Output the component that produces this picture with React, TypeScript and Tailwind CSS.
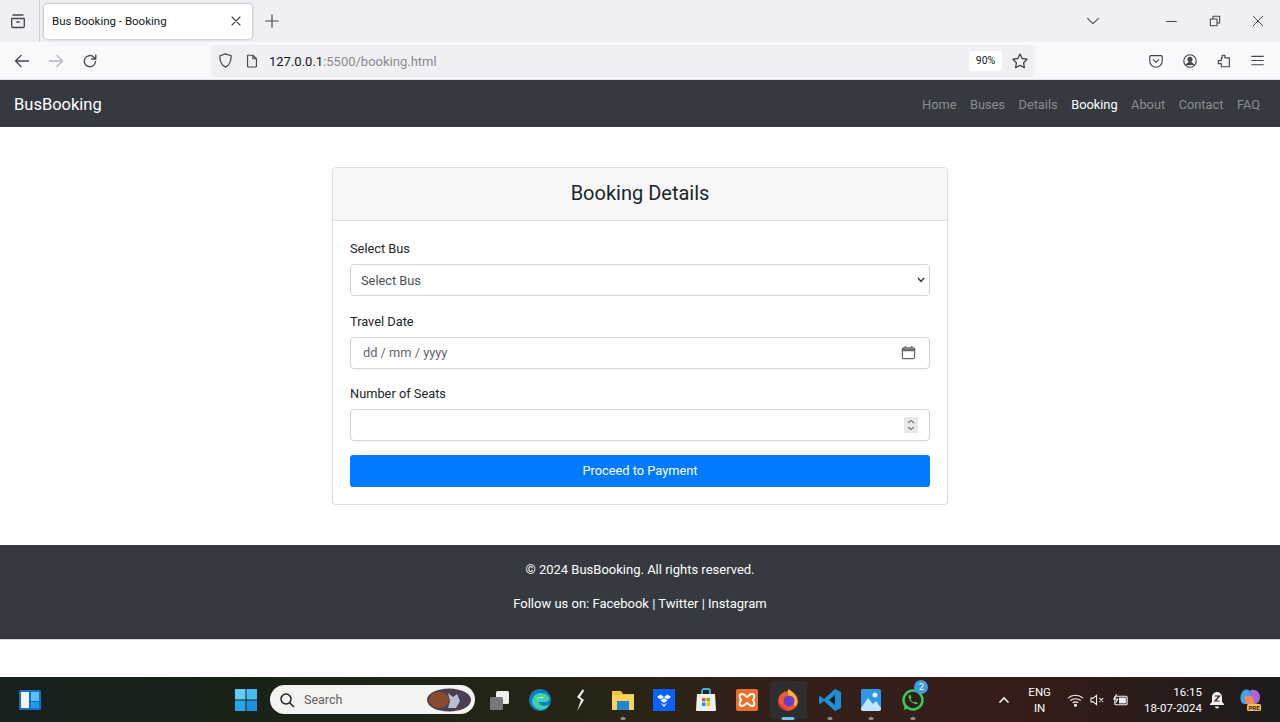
import React from "react";

const font = "font-['Roboto','Noto_Sans',sans-serif]";

const navLinks = ["Home", "Buses", "Details", "Booking", "About", "Contact", "FAQ"];

const Field: React.FC<{ label: string; children: React.ReactNode }> = ({ label, children }) => (
  <div className="mb-[14.5px]">
    <div className="h-[26px] text-[12.8px] leading-[20px] pt-[1px] text-[#212529]">{label}</div>
    <div className="h-[32px] rounded-[4px] border border-[#ced4da] bg-white flex items-center justify-between text-[12.8px] text-[#495057]">
      {children}
    </div>
  </div>
);

const ChromeIcon: React.FC<{ children: React.ReactNode; size?: number; className?: string }> = ({ children, size = 18, className = "" }) => (
  <svg width={size} height={size} viewBox="0 0 18 18" fill="none" stroke="currentColor" strokeWidth={1.3} strokeLinecap="round" strokeLinejoin="round" className={`shrink-0 ${className}`}>
    {children}
  </svg>
);

const BrowserChrome = () => (
  <div className="bg-[#f0f0f4] text-[#45454d]">
    {/* Tab strip */}
    <div className="h-[42px] flex items-center relative">
      <div className="w-[40px] h-full flex items-center justify-center border-r border-[#d4d4d8]">
        <ChromeIcon className="ml-[-3px]">
          <path d="M4 3h10M2.7 6.5h12.6v7.7a1.3 1.3 0 0 1-1.3 1.3H4a1.3 1.3 0 0 1-1.3-1.3zM7.8 10h2.4" />
        </ChromeIcon>
      </div>
      <div className="ml-[4px] w-[208px] h-[35px] bg-white rounded-[4px] shadow-[0_0_3px_rgba(0,0,0,0.35)] flex items-center justify-between pl-[8px] pr-[10px]">
        <span className="pt-[1px] text-[11.5px] text-[#15141a]">Bus Booking - Booking</span>
        <ChromeIcon size={12}><path d="M3 3l12 12M15 3L3 15" strokeWidth={1.7} /></ChromeIcon>
      </div>
      <ChromeIcon size={16} className="ml-[12px]"><path d="M9 2v14M2 9h14" /></ChromeIcon>
      <div className="ml-auto flex items-center">
        <ChromeIcon size={14} className="mr-[66px]"><path d="M2 5.5l7 7 7-7" /></ChromeIcon>
        <ChromeIcon size={11} className="mr-[32px]"><path d="M1 9h16" strokeWidth={1.8} /></ChromeIcon>
        <ChromeIcon size={12} className="mr-[31px]"><path d="M2 6h10v10H2zM6 6V2h10v10h-4" strokeWidth={1.6} /></ChromeIcon>
        <ChromeIcon size={12} className="mr-[16px]"><path d="M2 2l14 14M16 2L2 16" strokeWidth={1.5} /></ChromeIcon>
      </div>
    </div>
    {/* Toolbar */}
    <div className="h-[38px] bg-[#f9f9fb] flex items-center border-b border-[#e0e0e6]">
      <div className="w-[211px] flex items-center pl-[13px] gap-[16px] shrink-0">
        <ChromeIcon><path d="M15.5 9h-13M8 3.5L2.5 9 8 14.5" /></ChromeIcon>
        <ChromeIcon className="text-[#b6b6bb]"><path d="M2.5 9h13M10 3.5L15.5 9 10 14.5" /></ChromeIcon>
        <ChromeIcon><path d="M14.5 9.5a5.6 5.6 0 1 1-1.7-4.4L14.6 7M14.8 2.8V7h-4.2" /></ChromeIcon>
      </div>
      <div className="w-[824px] h-[32px] bg-[#f0f0f4] rounded-[4px] flex items-center pl-[6px] shrink-0">
        <ChromeIcon size={17}><path d="M9 2l6 2c0 6-1.5 10-6 12C4.500 14 3 10 3 4z" /></ChromeIcon>
        <ChromeIcon size={16} className="ml-[10px]"><path d="M4 2.500h6l4 4V15a.8.8 0 0 1-.8.8H4.800A.8.8 0 0 1 4 15zM10 2.500v4h4" /></ChromeIcon>
        <span className="ml-[9px] pt-[2px] text-[13px] text-[#8a8a90]"><span className="text-[#15141a]">127.0.0.1</span>:5500/booking.html</span>
        <span className="ml-auto w-[33px] h-[20px] bg-white rounded-[3px] flex items-center justify-center text-[10.5px] text-[#15141a]">90%</span>
        <ChromeIcon className="ml-[9px] mr-[6px]"><path d="M9 2l2.200 4.500 4.900.7-3.500 3.500.8 4.900L9 13.300l-4.400 2.300.8-4.900L1.900 7.200l4.900-.7z" /></ChromeIcon>
      </div>
      <div className="ml-auto flex items-center gap-[18px] pr-[15px]">
        <ChromeIcon size={16}><path d="M3.200 3h11.600a1.200 1.200 0 0 1 1.200 1.200V9a7 7 0 0 1-14 0V4.200A1.200 1.200 0 0 1 3.200 3zM6 7.500l3 3 3-3" /></ChromeIcon>
        <ChromeIcon size={16}>
          <circle cx="9" cy="9" r="7" />
          <circle cx="9" cy="7.200" r="2.200" fill="currentColor" />
          <path d="M4.800 13.500c1-2 2.500-2.700 4.200-2.700s3.200.7 4.200 2.700" fill="currentColor" />
        </ChromeIcon>
        <ChromeIcon size={16}><path d="M7 2.500h3v3h5v10H6v-3.500H2.500V8.500H6v-3h1z" /></ChromeIcon>
        <ChromeIcon size={15}><path d="M2 4h14M2 9h14M2 14h14" /></ChromeIcon>
      </div>
    </div>
  </div>
);

const Navbar = () => (
  <nav className="h-[47px] bg-[#343a40] flex items-center justify-between pl-[14px] pr-[20px]">
    <span className="pt-[3px] text-[16.5px] text-white">BusBooking</span>
    <div className="flex items-center gap-[13.5px] pt-[2px]">
      {navLinks.map((l) => (
        <span key={l} className={`text-[12.8px] ${l === "Booking" ? "text-white" : "text-[#8a8d90]"}`}>{l}</span>
      ))}
    </div>
  </nav>
);

const BookingCard = () => (
  <div className="w-[616px] mx-auto rounded-[4px] border border-[#dfdfdf] bg-white overflow-hidden">
    <div className="h-[53px] pb-[2px] bg-[#f7f7f7] border-b border-[#dfdfdf] flex items-center justify-center text-[20px] text-[#212529]">
      Booking Details
    </div>
    <div className="px-[17px] pt-[17px] pb-[17px]">
      <Field label="Select Bus">
        <span className="pl-[10px] pt-[2px]">Select Bus</span>
        <svg width="8" height="6" viewBox="0 0 8 6" fill="none" stroke="#333" strokeWidth={1.4} className="mr-[4px]"><path d="M1 1l3 3.400L7 1" /></svg>
      </Field>
      <Field label="Travel Date">
        <span className="pl-[12px] pt-[1px] text-[#5f666d]">dd / mm / yyyy</span>
        <svg width="15" height="15" viewBox="0 0 16 16" fill="none" stroke="#666" strokeWidth={1.3} className="mr-[13px]">
          <rect x="1.500" y="3" width="13" height="11.500" rx="1.200" />
          <path d="M1.500 4.500h13v1.500h-13z" fill="#666" />
          <path d="M4.500 1v2M11.500 1v2" />
        </svg>
      </Field>
      <Field label="Number of Seats">
        <span />
        <span className="mr-[11px] w-[14px] h-[16px] bg-[#e9e9ed] flex items-center justify-center">
          <svg width="8" height="12" viewBox="0 0 8 12" fill="none" stroke="#777" strokeWidth={1.1}><path d="M1 4l3-2.500L7 4M1 8l3 2.500L7 8" /></svg>
        </span>
      </Field>
      <button className="w-full h-[32px] -mt-[1px] pt-[1px] bg-[#007bff] rounded-[3px] text-white text-[12.8px]">Proceed to Payment</button>
    </div>
  </div>
);

const Footer = () => (
  <footer className="h-[95px] bg-[#343a40] text-white text-[13px] flex flex-col items-center pt-[15px] gap-[14px] border-b border-[#d9d9d9]">
    <p className="leading-[20px]">© 2024 BusBooking. All rights reserved.</p>
    <p className="leading-[20px]">Follow us on: Facebook | Twitter | Instagram</p>
  </footer>
);

const Dot: React.FC<{ active?: boolean }> = ({ active }) => (
  <span className={`absolute bottom-[-1px] left-1/2 -translate-x-1/2 h-[3px] rounded-full ${active ? "w-[13px] bg-[#6fc3ea]" : "w-[5px] bg-[#8b8b8b]"}`} />
);

const TaskIcon: React.FC<{ children: React.ReactNode; dot?: boolean; active?: boolean; badge?: string }> = ({ children, dot, active, badge }) => (
  <div className="relative w-[41.4px] h-[38px] flex items-center justify-center">
    {active && <span className="absolute inset-y-0 inset-x-[2px] rounded-[4px] bg-[#2e2e2e]" />}
    <svg width="24" height="24" viewBox="0 0 24 24" className="relative">{children}</svg>
    {(dot || active) && <Dot active={active} />}
    {badge && (
      <span className="absolute top-[-1px] right-[5px] w-[14px] h-[14px] rounded-full bg-[#3d9be0] text-white text-[9.5px] leading-[14px] text-center">{badge}</span>
    )}
  </div>
);

const Taskbar = () => (
  <div className="mt-auto h-[45px] bg-[linear-gradient(90deg,#17201c_0%,#1c2415_30%,#2a2416_50%,#33201a_62%,#351c18_80%,#1d1c1c_100%)] flex items-center text-white">
    <div className="w-[234px] pl-[18px] shrink-0">
      <svg width="24" height="24" viewBox="0 0 24 24">
        <rect x="1" y="2" width="22" height="20" rx="1.500" fill="#1072c9" />
        <rect x="3" y="4" width="8" height="16" fill="#f2f6fb" />
        <rect x="13" y="4" width="8" height="9" fill="#5cc2f5" />
        <rect x="13" y="14" width="8" height="6" fill="#2599ea" />
      </svg>
    </div>
    <svg width="24" height="24" viewBox="0 0 24 24" className="shrink-0">
      <rect x="1" y="1" width="10.500" height="10.500" fill="#5fcdf5" />
      <rect x="12.500" y="1" width="10.500" height="10.500" fill="#45bdf2" />
      <rect x="1" y="12.500" width="10.500" height="10.500" fill="#2aa5ea" />
      <rect x="12.500" y="12.500" width="10.500" height="10.500" fill="#1e90e0" />
    </svg>
    <div className="ml-[12px] w-[205px] h-[29px] rounded-full bg-[#f3f3f1] flex items-center pl-[9px] pr-[3px] shrink-0">
      <svg width="16" height="16" viewBox="0 0 16 16" fill="none" stroke="#222" strokeWidth={1.500}><circle cx="7" cy="7" r="5" /><path d="M10.500 10.500L15 15" /></svg>
      <span className="ml-[9px] pt-[1px] text-[12.5px] text-[#5f5f5f]">Search</span>
      <svg width="46" height="24" viewBox="0 0 46 24" className="ml-auto">
        <ellipse cx="23" cy="12" rx="22" ry="11.500" fill="#4a3f52" />
        <ellipse cx="13" cy="12" rx="10" ry="8" fill="#8c4a2c" />
        <path d="M22 5l5 4 4-3 3 7-4 7h-8l2-7z" fill="#b8bdd0" />
      </svg>
    </div>
    <div className="ml-[3px] flex items-center shrink-0">
      <TaskIcon>
        <rect x="9" y="3" width="13" height="13" rx="1.500" fill="#eeeeee" />
        <rect x="3" y="9" width="13" height="13" rx="1.500" fill="#777777" />
      </TaskIcon>
      <TaskIcon>
        <circle cx="12" cy="12" r="11" fill="#0d7bc6" />
        <path d="M5 10c2-6 12-7 16-1 1 2 0 5-4 5H11c0 3 5 5 10 3-3 5-9 6-13 3C4 17 3 14 5 10z" fill="#3fd0a8" />
        <path d="M9 12c1-3 5-4 7-2H9z" fill="#e8f7f2" />
      </TaskIcon>
      <TaskIcon>
        <path d="M14 1L8 9l4 3-4 11 7-11-4-3 4-6z" fill="#f0f0f0" />
      </TaskIcon>
      <TaskIcon dot>
        <path d="M1 3h9l2 3h11v15H1z" fill="#f5c23e" />
        <rect x="1" y="7" width="22" height="15" fill="#f9d45c" />
        <rect x="6" y="13" width="12" height="9" fill="#1e88d6" />
      </TaskIcon>
      <TaskIcon>
        <rect x="1" y="1" width="22" height="22" fill="#0b61ff" />
        <path d="M8.500 6.500L12 9l-3.500 2.500L5 9zM15.500 6.500L19 9l-3.500 2.500L12 9zM8.500 12.500L12 10l3.500 2.500L12 15zM8.500 14.500L12 17l3.500-2.500L12 19z" fill="#ffffff" />
      </TaskIcon>
      <TaskIcon>
        <path d="M3 6h18l1 16a1 1 0 0 1-1 1H3a1 1 0 0 1-1-1z" fill="#f0f0f0" />
        <path d="M8 6V3a2 2 0 0 1 2-2h4a2 2 0 0 1 2 2v3" fill="none" stroke="#3bb4e8" strokeWidth={1.800} />
        <rect x="8" y="10" width="3.500" height="3.500" fill="#e8502e" />
        <rect x="12.500" y="10" width="3.500" height="3.500" fill="#7fba00" />
        <rect x="8" y="14.500" width="3.500" height="3.500" fill="#00a4ef" />
        <rect x="12.500" y="14.500" width="3.500" height="3.500" fill="#ffb900" />
      </TaskIcon>
      <TaskIcon>
        <rect x="1" y="1" width="22" height="22" rx="2" fill="#e8702a" />
        <path d="M7 6c3 0 4 3 5 3s2-3 5-3 3 3 1 6c2 3 2 6-1 6s-4-3-5-3-2 3-5 3-3-3-1-6c-2-3-2-6 1-6z" fill="none" stroke="#fff" strokeWidth={2} />
      </TaskIcon>
      <TaskIcon active>
        <circle cx="12" cy="13" r="10" fill="#f0592b" />
        <path d="M12 1c4 2 6 4 8 8 2 3 2 7 0 9L12 13z" fill="#fbb532" />
        <circle cx="13" cy="13" r="5.500" fill="#6a3cc8" />
        <path d="M2 11c2 6 5 9 10 10-6 2-11-4-10-10z" fill="#e5284f" />
      </TaskIcon>
      <TaskIcon dot>
        <path d="M17 1l6 3v16l-6 3L6 13l-4 3-1-1v-6l1-1 4 3z" fill="#1c8fd8" />
        <path d="M17 7l-6 5 6 5z" fill="#1b2218" />
      </TaskIcon>
      <TaskIcon dot>
        <rect x="2" y="1" width="20" height="22" rx="2" fill="#2f97e6" />
        <path d="M2 20l7-10 5 6 3-3 5 7v1a2 2 0 0 1-2 2H4a2 2 0 0 1-2-2z" fill="#bfe6fb" />
        <circle cx="16" cy="7" r="2.500" fill="#e6f5ff" />
      </TaskIcon>
      <TaskIcon dot badge="2">
        <circle cx="12" cy="12" r="9.500" fill="none" stroke="#3cc85a" strokeWidth={2.500} />
        <path d="M2.500 22l1.800-6 4 4z" fill="#3cc85a" />
        <path d="M8 7c-1 2 0 5 2.500 7s5 3 6.500 1.500l-2.500-2-1.500 1c-1.500-.5-3-2-3.500-3.500l1-1.500L9.500 7z" fill="#3cc85a" />
      </TaskIcon>
    </div>
    <div className="ml-auto flex items-center text-[11.5px] pr-[18px]">
      <svg width="12" height="8" viewBox="0 0 12 8" fill="none" stroke="#f2f2f2" strokeWidth={1.600} className="mr-[18px]"><path d="M1.500 6.500L6 2l4.500 4.500" /></svg>
      <div className="text-center leading-[16px] mr-[16px] pt-[1px]"><div>ENG</div><div>IN</div></div>
      <svg width="17" height="14" viewBox="0 0 18 14" fill="none" stroke="#f2f2f2" strokeWidth={1.200} className="mr-[6px]">
        <path d="M1 5c4.500-4 11.500-4 16 0M3.500 7.500c3-2.500 8-2.500 11 0M6 10c1.500-1 4.500-1 6 0" />
        <circle cx="9" cy="12.500" r="1" fill="#f2f2f2" />
      </svg>
      <svg width="15" height="14" viewBox="0 0 16 14" fill="none" stroke="#f2f2f2" strokeWidth={1.100} className="mr-[7px]">
        <path d="M1 5h2.500L7 2v10L3.500 9H1zM10 5l4 4M14 5l-4 4" />
      </svg>
      <svg width="17" height="14" viewBox="0 0 18 14" fill="none" stroke="#f2f2f2" strokeWidth={1.200} className="mr-[15px]">
        <rect x="3" y="3" width="13" height="9" rx="1" />
        <rect x="8" y="5" width="6" height="5" fill="#f2f2f2" />
        <path d="M5 1L2 6h4l-2 4" />
      </svg>
      <div className="text-right leading-[16px] mr-[7px]"><div>16:15</div><div>18-07-2024</div></div>
      <svg width="16" height="18" viewBox="0 0 16 18" fill="#f2f2f2" className="mr-[13px]">
        <path d="M8 1a5 5 0 0 0-5 5v5l-2 2v1h14v-1l-2-2V6a5 5 0 0 0-5-5zM6 15.500h4a2 2 0 0 1-4 0z" />
        <path d="M5.500 5h5L6 10h4.500" fill="none" stroke="#2a1c18" strokeWidth={1.200} />
      </svg>
      <svg width="24" height="24" viewBox="0 0 24 24">
        <path d="M5 3c3-2 6-2 7 1l3 12H6C2 16 1 7 5 3z" fill="#3ca5ea" />
        <path d="M13 2c5-1 9 2 9 7 0 4-3 8-7 8l-3-11c-.5-2 0-3.500 1-4z" fill="#a866dc" />
        <path d="M6 8h8l3 8H8z" fill="#f08a5a" />
        <rect x="9" y="16" width="14" height="7" rx="1.500" fill="#f3c14b" />
        <text x="16" y="22" textAnchor="middle" fontSize="6" fontWeight="700" fill="#222">PRE</text>
      </svg>
    </div>
  </div>
);

export default function App() {
  return (
    <div className={`${font} w-[1280px] h-[722px] overflow-hidden flex flex-col bg-white`}>
      <BrowserChrome />
      <Navbar />
      <main className="h-[418px] pt-[40px]">
        <BookingCard />
      </main>
      <Footer />
      <Taskbar />
    </div>
  );
}
